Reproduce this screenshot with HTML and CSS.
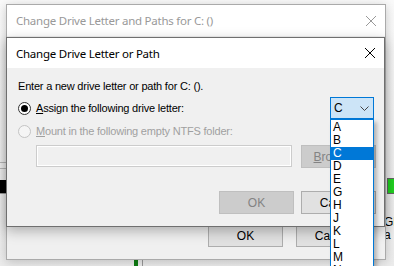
FILE: index.html
```html
<!DOCTYPE html>
<html lang="en">
<head>
    <meta charset="UTF-8">
    <title>Change Drive Letter or Path</title>
    <link rel="stylesheet" href="styles.css">
</head>
<body>
    <div class="desktop">
        <!-- bits of the disk management window behind -->
        <div class="bg-line bg-line-1"></div>
        <div class="bg-line bg-line-2"></div>
        <div class="bg-black-bar"></div>
        <div class="bg-green-bar"></div>
        <div class="bg-text bg-text-gb">GB</div>
        <div class="bg-text bg-text-a">a</div>
        <div class="bg-green-tick"></div>
        <div class="bg-gray-tick"></div>

        <div class="window back-window">
            <div class="titlebar">
                <span class="title">Change Drive Letter and Paths for C: ()</span>
                <svg class="close" width="10" height="10" viewBox="0 0 10 10"><path d="M0 0L10 10M10 0L0 10" stroke="currentColor" stroke-width="1"/></svg>
            </div>
            <div class="back-body">
                <div class="buttons">
                    <button class="btn">OK</button>
                    <button class="btn">Cancel</button>
                </div>
            </div>
        </div>

        <div class="window front-window">
            <div class="titlebar">
                <span class="title">Change Drive Letter or Path</span>
                <svg class="close" width="10" height="10" viewBox="0 0 10 10"><path d="M0 0L10 10M10 0L0 10" stroke="currentColor" stroke-width="1"/></svg>
            </div>
            <div class="dialog-body">
                <p class="prompt">Enter a new drive letter or path for C: ().</p>
                <div class="option-row">
                    <label class="radio">
                        <span class="radio-dot checked"></span>
                        <span><u>A</u>ssign the following drive letter:</span>
                    </label>
                    <div class="combo">
                        <span>C</span>
                        <svg width="9" height="5" viewBox="0 0 9 5"><path d="M0.5 0.5L4.5 4.5L8.5 0.5" fill="none" stroke="#444" stroke-width="1"/></svg>
                    </div>
                </div>
                <label class="radio disabled">
                    <span class="radio-dot"></span>
                    <span><u>M</u>ount in the following empty NTFS folder:</span>
                </label>
                <div class="folder-row">
                    <div class="folder-box"></div>
                    <button class="btn" disabled><u>B</u>rowse...</button>
                </div>
                <div class="buttons">
                    <button class="btn" disabled>OK</button>
                    <button class="btn">Cancel</button>
                </div>
            </div>
        </div>

        <ul class="drive-list">
            <li>A</li>
            <li>B</li>
            <li class="selected">C</li>
            <li>D</li>
            <li>E</li>
            <li>G</li>
            <li>H</li>
            <li>J</li>
            <li>K</li>
            <li>L</li>
            <li>M</li>
            <li>N</li>
        </ul>
    </div>
</body>
</html>
```

FILE: styles.css
```css
/* Windows 10 style dialogs */
body {
    margin: 0;
    padding: 0;
    font-family: "Liberation Sans", Arial, sans-serif;
    font-size: 11px;
    letter-spacing: -0.2px;
    color: #000;
}

.desktop {
    position: relative;
    width: 394px;
    height: 266px;
    overflow: hidden;
    background: linear-gradient(to bottom, #fafafa, #ececec);
}

.bg-line {
    position: absolute;
    left: 0;
    width: 8px;
    height: 1px;
    background-color: #b9b9b9;
}

.bg-line-1 { top: 162px; }
.bg-line-2 { top: 168px; }

.bg-black-bar {
    position: absolute;
    left: 0;
    top: 180px;
    width: 8px;
    height: 13px;
    background-color: #000;
    border-bottom: 1px solid #999;
}

.bg-green-bar {
    position: absolute;
    left: 387px;
    top: 178px;
    width: 10px;
    height: 14px;
    background-color: #21d321;
    border: 1px solid #666;
}

.bg-text {
    position: absolute;
    left: 384px;
    line-height: 14px;
    font-size: 12px;
}

.bg-text-gb { top: 215px; }
.bg-text-a { top: 228px; }

.bg-green-tick {
    position: absolute;
    left: 134px;
    top: 259px;
    width: 4px;
    height: 8px;
    background-color: #0e7d12;
}

.bg-gray-tick {
    position: absolute;
    left: 142px;
    top: 260px;
    width: 1px;
    height: 6px;
    background-color: #999;
}

.window {
    position: absolute;
    display: flex;
    flex-direction: column;
    background-color: #f0f0f0;
    box-sizing: border-box;
}

.back-window {
    left: 6px;
    top: 4px;
    width: 380px;
    height: 256px;
    border: 1px solid #aaa;
    box-shadow: 0 2px 10px rgba(0, 0, 0, 0.2);
}

.front-window {
    left: 6px;
    top: 37px;
    width: 379px;
    height: 190px;
    border: 1px solid #6f6f6f;
    box-shadow: 0 4px 12px rgba(0, 0, 0, 0.28);
}

.titlebar {
    display: flex;
    align-items: center;
    justify-content: space-between;
    height: 30px;
    padding: 0 9px 0 9px;
    background-color: #fff;
    flex-shrink: 0;
}

.title {
    font-family: "Noto Sans", sans-serif;
    font-size: 11.5px;
    letter-spacing: -0.25px;
}

.back-window .titlebar {
    height: 31px;
    color: #999;
}

.close {
    color: #000;
}

.back-window .close {
    color: #999;
}

.back-body {
    flex: 1;
    display: flex;
    flex-direction: column;
    justify-content: flex-end;
    padding: 0 0 12px 0;
}

.back-body .buttons {
    gap: 13px;
    justify-content: flex-start;
    padding-left: 201px;
}

.dialog-body {
    flex: 1;
    padding: 11px 8px 0 11px;
}

.prompt {
    margin: 0;
    line-height: 15px;
}

.option-row {
    display: flex;
    align-items: center;
    justify-content: space-between;
    margin-top: 3px;
    height: 22px;
}

.radio {
    display: flex;
    align-items: center;
    gap: 5px;
    line-height: 15px;
}

.radio.disabled {
    margin-top: 5px;
    color: #a0a0a0;
}

.radio-dot {
    position: relative;
    width: 11px;
    height: 11px;
    border: 1px solid #333;
    border-radius: 50%;
    background-color: #fff;
}

.radio.disabled .radio-dot {
    border-color: #c4c4c4;
    background-color: #f5f5f5;
}

.radio-dot.checked::after {
    content: "";
    position: absolute;
    left: 2px;
    top: 2px;
    width: 7px;
    height: 7px;
    border-radius: 50%;
    background-color: #000;
}

.combo {
    display: flex;
    align-items: center;
    justify-content: space-between;
    width: 44px;
    height: 22px;
    margin-right: 2px;
    padding: 0 4px 0 3px;
    box-sizing: border-box;
    font-size: 12px;
    background-color: #cce4f7;
    border: 1px solid #0078d7;
}

.folder-row {
    display: flex;
    justify-content: space-between;
    margin-top: 6px;
    padding-left: 18px;
}

.folder-box {
    width: 256px;
    height: 22px;
    box-sizing: border-box;
    border: 1px solid #ccc;
    box-shadow: inset 0 0 0 1px #fff;
    background-color: #f0f0f0;
}

.buttons {
    display: flex;
    justify-content: flex-end;
    gap: 7px;
    margin-top: 23px;
}

.btn {
    width: 75px;
    height: 23px;
    padding: 0;
    font-family: inherit;
    font-size: 12px;
    letter-spacing: 0;
    color: #000;
    background-color: #e1e1e1;
    border: 1px solid #adadad;
}

.btn:disabled {
    color: #838383;
    background-color: #cccccc;
    border-color: #bfbfbf;
}

.drive-list {
    position: absolute;
    left: 330px;
    top: 119px;
    width: 44px;
    margin: 0;
    padding: 0;
    list-style: none;
    font-size: 12px;
    letter-spacing: 0;
    background-color: #fff;
    border: 1px solid #0078d7;
    box-sizing: border-box;
    box-shadow: 3px 3px 4px rgba(0, 0, 0, 0.25);
}

.drive-list li {
    height: 13px;
    line-height: 13px;
    padding-left: 2px;
}

.drive-list li:first-child {
    margin-top: 1px;
}

.drive-list .selected {
    background-color: #0078d7;
    color: #fff;
}
```
